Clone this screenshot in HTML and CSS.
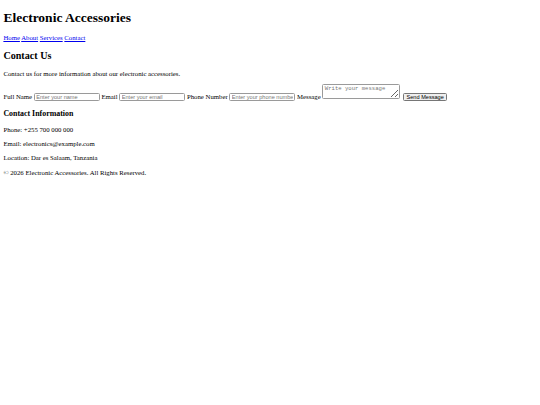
FILE: index.html
```html
<!DOCTYPE html>
<html lang="en">
<head>
<meta charset="utf-8">
<title>Electronic Accessories</title>
<link rel="stylesheet" href="styles.css">
</head>
<body class="page">
<header class="site-header">
<h1 class="title">Electronic Accessories</h1>
<nav class="nav">
<a href="#" class="nav-link">Home</a>
<a href="#" class="nav-link">About</a>
<a href="#" class="nav-link">Services</a>
<a href="#" class="nav-link">Contact</a>
</nav>
</header>
<main class="content">
<section class="contact">
<h2 class="heading">Contact Us</h2>
<p class="text">Contact us for more information about our electronic accessories.</p>
<form class="form">
<label class="label">Full Name</label>
<input class="field" type="text" placeholder="Enter your name">
<label class="label">Email</label>
<input class="field" type="email" placeholder="Enter your email">
<label class="label">Phone Number</label>
<input class="field" type="tel" placeholder="Enter your phone number">
<label class="label">Message</label>
<textarea class="message" placeholder="Write your message"></textarea>
<button class="send" type="button">Send Message</button>
</form>
<h3 class="subheading">Contact Information</h3>
<p class="text">Phone: +255 700 000 000</p>
<p class="text">Email: electronics@example.com</p>
<p class="text">Location: Dar es Salaam, Tanzania</p>
</section>
</main>
<footer class="footer">
<p class="text">&copy; 2026 Electronic Accessories. All Rights Reserved.</p>
</footer>
</body>
</html>
```
FILE: styles.css
```css
html { background: #fff; }
.page {
  margin: 3.4px;
  font-family: "Liberation Serif", "Times New Roman", serif;
  font-size: 6.75px;
  line-height: 7.75px;
  color: #000;
}
.title {
  font-size: 13.5px;
  line-height: 15.5px;
  margin: 6.4px 0 8.7px;
}
.nav { line-height: 7.75px; }
.nav-link { color: #0000ee; }
.heading {
  font-size: 10.125px;
  line-height: 11.6px;
  margin: 8.4px 0;
}
.subheading {
  font-size: 7.9px;
  line-height: 9.1px;
  margin: 7.9px 0;
}
.text { margin: 6.4px 0; }
.form { margin: 0; line-height: 7.75px; }
.field {
  box-sizing: border-box;
  font-family: "Liberation Sans", Arial, sans-serif;
  font-size: 5.6px;
  padding: 0 1.5px;
  margin: 0;
  border: 1px solid #9a9a9a;
  width: 66px;
  height: 8px;
  border-radius: 1.5px;
}
.field::placeholder, .message::placeholder { color: #767676; }
.message {
  box-sizing: border-box;
  font-family: "Liberation Mono", "Courier New", monospace;
  font-size: 5.6px;
  line-height: 6.5px;
  padding: 1px 1.5px;
  margin: 0;
  border: 1px solid #9a9a9a;
  width: 78px;
  height: 15px;
  border-radius: 1.5px;
}
.send {
  box-sizing: border-box;
  font-family: "Liberation Sans", Arial, sans-serif;
  font-size: 5.6px;
  white-space: nowrap;
  padding: 0 2.5px;
  margin: 0 0 0 1px;
  border: 1px solid #767676;
  background: #efefef;
  color: #000;
  border-radius: 1.5px;
  width: 44px;
  height: 8px;
}
```
